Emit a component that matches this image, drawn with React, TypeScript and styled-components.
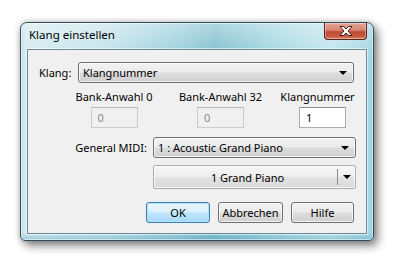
import React from "react";
import styled, { createGlobalStyle } from "styled-components";

const Global = createGlobalStyle`
  html, body { margin: 0; padding: 0; background: #ffffff; }
  body { font-family: "Segoe UI", "Noto Sans", sans-serif; font-size: 11px; color: #000; }
`;

const FONT = `"Segoe UI", "Noto Sans", "Open Sans", sans-serif`;
const FS = "11px";

const Page = styled.div`
  width: 413px;
  height: 276px;
  box-sizing: border-box;
  padding: 22px 0 0 20px;
  overflow: hidden;
`;

const Window = styled.div`
  width: 354px;
  height: 219px;
  box-sizing: border-box;
  border: 1px solid #2f4e5c;
  border-radius: 7px 7px 5px 5px;
  padding: 0 6px 6px;
  display: flex;
  flex-direction: column;
  background:
    linear-gradient(to bottom, rgba(255,255,255,0.35) 0px, rgba(255,255,255,0) 30px),
    linear-gradient(to right, #d6ecf1 0%, #c4e4eb 25%, #9ed0dc 45%, #86c2cf 55%, #a8d8e2 72%, #c4e6ed 88%, #a6d8e4 100%);
  box-shadow:
    inset 0 0 0 1px rgba(255,255,255,0.55),
    inset 0 -4px 4px rgba(60,150,180,0.35),
    4px 5px 10px rgba(0,0,0,0.45),
    0 0 6px rgba(0,0,0,0.25);
`;

const TitleBar = styled.div`
  height: 26px;
  display: flex;
  justify-content: space-between;
  align-items: flex-start;
`;

const Title = styled.span`
  font-family: ${FONT};
  font-size: 11.5px;
  line-height: 24px;
  padding-left: 2px;
  color: #000;
`;

const CloseButton = styled.div`
  width: 43px;
  height: 17px;
  box-sizing: border-box;
  border: 1px solid #5a2418;
  border-top: none;
  border-radius: 0 0 4px 4px;
  background: linear-gradient(to bottom, #e6a696 0%, #d98570 45%, #c04a33 55%, #c85a40 85%, #d98a6c 100%);
  box-shadow: inset 0 0 0 1px rgba(255,255,255,0.35);
  display: flex;
  align-items: center;
  justify-content: center;
`;

const Client = styled.div`
  flex: 1;
  box-sizing: border-box;
  border: 1px solid #6a8a98;
  background: #f0f0f0;
  box-shadow: 0 0 0 1px rgba(255,255,255,0.55);
  display: flex;
  flex-direction: column;
  padding-top: 12px;
`;

const Row = styled.div<{ $left?: number; $top?: number }>`
  display: flex;
  align-items: center;
  padding-left: ${(p) => p.$left ?? 0}px;
  margin-top: ${(p) => p.$top ?? 0}px;
`;

const Label = styled.span<{ $width?: number; $align?: string }>`
  font-family: ${FONT};
  font-size: ${FS};
  line-height: 15px;
  color: #000;
  width: ${(p) => (p.$width ? `${p.$width}px` : "auto")};
  text-align: ${(p) => p.$align ?? "left"};
  flex-shrink: 0;
  white-space: nowrap;
`;

const Combo = styled.div<{ $width: number; $ml?: number }>`
  width: ${(p) => p.$width}px;
  height: 21px;
  margin-left: ${(p) => p.$ml ?? 0}px;
  box-sizing: border-box;
  border: 1px solid #707070;
  border-radius: 3px;
  background: linear-gradient(to bottom, #f2f2f2 0%, #ebebeb 48%, #dddddd 52%, #cfcfcf 100%);
  box-shadow: inset 0 0 0 1px rgba(255,255,255,0.7);
  display: flex;
  align-items: center;
  justify-content: space-between;
  padding: 0 6px 0 4px;
  font-family: ${FONT};
  font-size: ${FS};
  color: #000;
`;

const Arrow = styled.span`
  width: 0;
  height: 0;
  border-left: 4px solid transparent;
  border-right: 4px solid transparent;
  border-top: 4px solid #000;
`;

const Columns = styled.div`
  display: flex;
  padding-left: 50px;
  margin-top: 6px;
`;

const Column = styled.div<{ $width: number; $ml?: number; $shift?: number }>`
  width: ${(p) => p.$width}px;
  margin-left: ${(p) => p.$ml ?? 0}px;
  display: flex;
  flex-direction: column;
  align-items: center;
  gap: 3px;
  & > div:last-child {
    margin-left: ${(p) => (p.$shift ?? 0) * 2}px;
  }
`;

const Field = styled.div<{ $disabled?: boolean }>`
  width: 47px;
  height: 21px;
  box-sizing: border-box;
  border: 1px solid ${(p) => (p.$disabled ? "#c9cbcc" : "#abadb3")};
  border-top-color: ${(p) => (p.$disabled ? "#b5b8ba" : "#8d9096")};
  background: ${(p) => (p.$disabled ? "#f0f0f0" : "#ffffff")};
  color: ${(p) => (p.$disabled ? "#8a8a8a" : "#000")};
  font-family: ${FONT};
  font-size: ${FS};
  line-height: 19px;
  padding-left: 6px;
`;

const PianoButton = styled.div`
  width: 203px;
  height: 24px;
  margin: 7px 0 0 125px;
  box-sizing: border-box;
  border: 1px solid #acacac;
  border-radius: 2px;
  background: linear-gradient(to bottom, #f6f6f6 0%, #eeeeee 48%, #e2e2e2 52%, #dadada 100%);
  box-shadow: inset 0 0 0 1px rgba(255,255,255,0.7);
  display: flex;
  align-items: center;
  font-family: ${FONT};
  font-size: ${FS};
`;

const PianoText = styled.span`
  flex: 1;
  text-align: center;
  padding-left: 4px;
`;

const PianoArrowBox = styled.span`
  width: 17px;
  height: 16px;
  border-left: 1px solid #8a8a8a;
  display: flex;
  align-items: center;
  justify-content: center;
`;

const ButtonRow = styled.div`
  display: flex;
  gap: 8px;
  padding-left: 118px;
  margin-top: 13px;
`;

const Button = styled.div<{ $width: number; $default?: boolean }>`
  width: ${(p) => p.$width}px;
  height: 21px;
  box-sizing: border-box;
  border: 1px solid ${(p) => (p.$default ? "#3c7fb1" : "#707070")};
  border-radius: 3px;
  background: ${(p) =>
    p.$default
      ? "linear-gradient(to bottom, #eaf6fd 0%, #d9f0fc 48%, #bee6fd 52%, #a7d9f5 100%)"
      : "linear-gradient(to bottom, #f2f2f2 0%, #ebebeb 48%, #dddddd 52%, #cfcfcf 100%)"};
  box-shadow: ${(p) =>
    p.$default ? "inset 0 0 0 1px #b4e0f8" : "inset 0 0 0 1px rgba(255,255,255,0.7)"};
  display: flex;
  align-items: center;
  justify-content: center;
  font-family: ${FONT};
  font-size: ${FS};
  color: #000;
`;

const CloseGlyph = () => (
  <svg width="14" height="10" viewBox="0 0 14 10">
    <polygon
      points="1,0.5 4.5,0.5 7,3 9.5,0.5 13,0.5 9,5 13,9.5 9.5,9.5 7,7 4.5,9.5 1,9.5 5,5"
      fill="#ffffff"
      stroke="#4a1e16"
      strokeWidth="1"
      strokeLinejoin="round"
    />
  </svg>
);

export default function App() {
  return (
    <>
      <Global />
      <Page>
        <Window>
          <TitleBar>
            <Title>Klang einstellen</Title>
            <CloseButton>
              <CloseGlyph />
            </CloseButton>
          </TitleBar>
          <Client>
            <Row $left={11}>
              <Label $width={39}>Klang:</Label>
              <Combo $width={276}>
                <span>Klangnummer</span>
                <Arrow />
              </Combo>
            </Row>
            <Columns>
              <Column $width={72}>
                <Label>Bank-Anwahl 0</Label>
                <Field $disabled>0</Field>
              </Column>
              <Column $width={81} $ml={30}>
                <Label>Bank-Anwahl 32</Label>
                <Field $disabled>0</Field>
              </Column>
              <Column $width={65} $ml={24} $shift={5}>
                <Label>Klangnummer</Label>
                <Field>1</Field>
              </Column>
            </Columns>
            <Row $top={9}>
              <Label $width={119} $align="right">General MIDI:</Label>
              <Combo $width={203} $ml={6}>
                <span>1 : Acoustic Grand Piano</span>
                <Arrow />
              </Combo>
            </Row>
            <PianoButton>
              <PianoText>1 Grand Piano</PianoText>
              <PianoArrowBox>
                <Arrow />
              </PianoArrowBox>
            </PianoButton>
            <ButtonRow>
              <Button $width={64} $default>OK</Button>
              <Button $width={65}>Abbrechen</Button>
              <Button $width={63}>Hilfe</Button>
            </ButtonRow>
          </Client>
        </Window>
      </Page>
    </>
  );
}
